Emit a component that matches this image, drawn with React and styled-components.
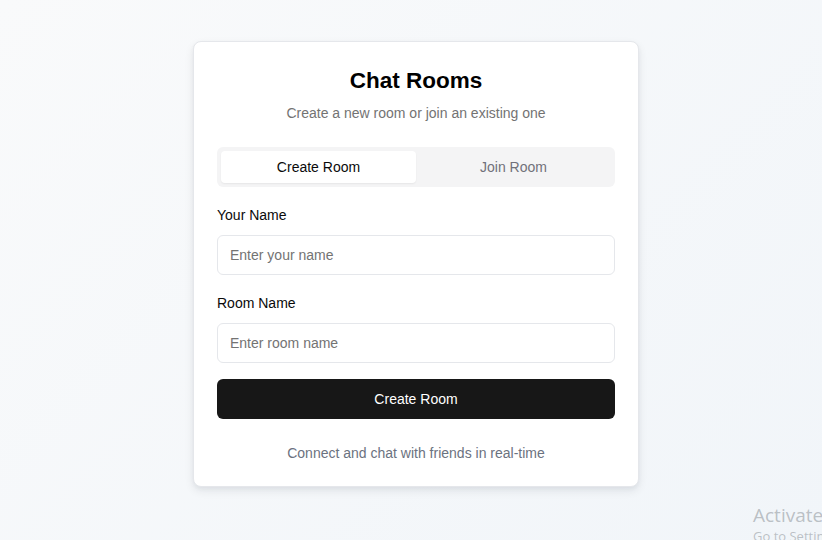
import styled, { createGlobalStyle } from "styled-components";
import { useState } from "react";

const GlobalStyle = createGlobalStyle`
  html, body {
    margin: 0;
    padding: 0;
    height: 100%;
    overflow: hidden;
  }
  body {
    font-family: "Liberation Sans", Arial, sans-serif;
  }
  #root {
    min-height: 100%;
  }
  * {
    box-sizing: border-box;
  }
`;

const App = () => {
  const [tab, setTab] = useState("create");
  const [name, setName] = useState("");
  const [room, setRoom] = useState("");

  return (
    <Page>
      <GlobalStyle />
      <Card>
        <Title>Chat Rooms</Title>
        <Subtitle>Create a new room or join an existing one</Subtitle>

        <Tabs>
          <Tab active={tab === "create"} onClick={() => setTab("create")}>
            Create Room
          </Tab>
          <Tab active={tab === "join"} onClick={() => setTab("join")}>
            Join Room
          </Tab>
        </Tabs>

        <Field>
          <Label htmlFor="name">Your Name</Label>
          <Input
            id="name"
            placeholder="Enter your name"
            value={name}
            onChange={(e) => setName(e.target.value)}
          />
        </Field>

        <Field>
          <Label htmlFor="room">Room Name</Label>
          <Input
            id="room"
            placeholder="Enter room name"
            value={room}
            onChange={(e) => setRoom(e.target.value)}
          />
        </Field>

        <SubmitButton>
          {tab === "create" ? "Create Room" : "Join Room"}
        </SubmitButton>

        <Footer>Connect and chat with friends in real-time</Footer>
      </Card>

      <Watermark>
        <WatermarkTitle>Activate Windows</WatermarkTitle>
        <WatermarkText>Go to Settings to activate Windows.</WatermarkText>
      </Watermark>
    </Page>
  );
};

export default App;

// --- Styled Components ---

const Page = styled.div`
  position: relative;
  min-height: 540px;
  height: 100vh;
  display: flex;
  justify-content: center;
  align-items: flex-start;
  padding: 41px 0 0 10px;
  background: linear-gradient(135deg, #f9fafb 0%, #f1f5f9 100%);
`;

const Card = styled.div`
  width: 446px;
  background: #ffffff;
  border: 1px solid #e5e7eb;
  border-radius: 8px;
  padding: 23px;
  display: flex;
  flex-direction: column;
  box-shadow: 0 4px 10px rgba(15, 23, 42, 0.08), 0 2px 4px rgba(15, 23, 42, 0.04);
`;

const Title = styled.h1`
  margin: 0;
  font-size: 22.5px;
  line-height: 32px;
  font-weight: 700;
  color: #000000;
  text-align: center;
`;

const Subtitle = styled.p`
  margin: 6px 0 0;
  font-size: 14px;
  line-height: 20px;
  color: #737373;
  text-align: center;
`;

const Tabs = styled.div`
  margin-top: 24px;
  height: 40px;
  padding: 4px;
  display: grid;
  grid-template-columns: 1fr 1fr;
  background: #f4f4f5;
  border-radius: 6px;
`;

const Tab = styled.button`
  border: none;
  border-radius: 4px;
  font-family: inherit;
  font-size: 14px;
  line-height: 20px;
  cursor: pointer;
  background: ${(props) => (props.active ? "#ffffff" : "transparent")};
  color: ${(props) => (props.active ? "#0a0a0a" : "#71717a")};
  box-shadow: ${(props) =>
    props.active ? "0 1px 2px rgba(0, 0, 0, 0.06)" : "none"};
`;

const Field = styled.div`
  margin-top: 18px;
  display: flex;
  flex-direction: column;
  gap: 10px;
`;

const Label = styled.label`
  font-size: 14px;
  line-height: 20px;
  color: #0a0a0a;
`;

const Input = styled.input`
  height: 40px;
  width: 100%;
  padding: 0 12px;
  border: 1px solid #e5e7eb;
  border-radius: 6px;
  font-family: inherit;
  font-size: 14px;
  color: #0a0a0a;
  background: #ffffff;
  outline: none;

  &::placeholder {
    color: #737373;
  }
`;

const SubmitButton = styled.button`
  margin-top: 16px;
  height: 40px;
  border: none;
  border-radius: 6px;
  background: #171717;
  color: #ffffff;
  font-family: inherit;
  font-size: 14px;
  cursor: pointer;
`;

const Footer = styled.p`
  margin: 24px 0 0;
  font-size: 14px;
  line-height: 20px;
  color: #6b7280;
  text-align: center;
`;

// Windows activation overlay sitting over the page corner
const Watermark = styled.div`
  position: absolute;
  left: 753px;
  top: 503px;
  white-space: nowrap;
  pointer-events: none;
  font-family: "Open Sans", "Noto Sans", sans-serif;
  color: rgba(140, 146, 152, 0.55);
`;

const WatermarkTitle = styled.div`
  font-size: 19px;
  line-height: 24px;
`;

const WatermarkText = styled.div`
  font-size: 13px;
  line-height: 18px;
`;
